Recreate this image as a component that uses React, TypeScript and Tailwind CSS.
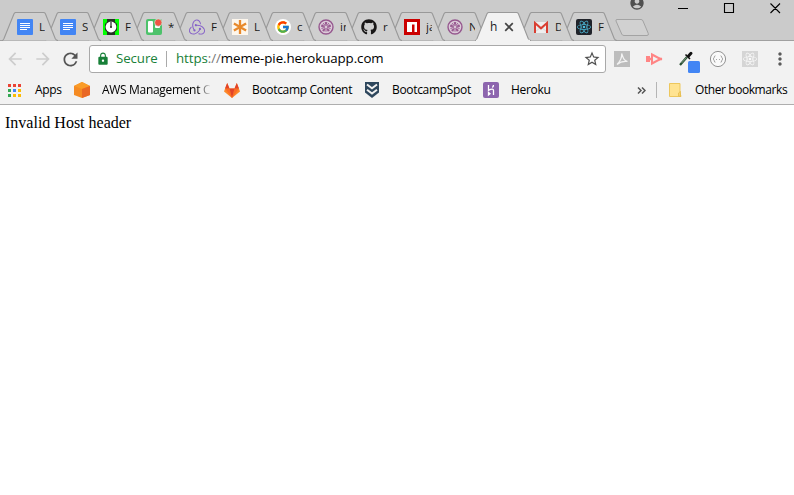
import type { ReactNode } from 'react';
import { FaGithub } from 'react-icons/fa';
import { FcGoogle } from 'react-icons/fc';
import { SiRedux, SiReact } from 'react-icons/si';
import { MdArrowBack, MdArrowForward, MdRefresh, MdLock, MdStarBorder, MdAccountCircle, MdMoreVert } from 'react-icons/md';

function DocsIcon() {
  return (
    <svg width="16" height="16" viewBox="0 0 16 16">
      <rect width="16" height="16" rx="1" fill="#4285f4" />
      <path d="M3 4.500h10M3 6.500h10M3 8.500h10M3 10.500h7" stroke="#fff" strokeWidth="1" />
    </svg>
  );
}

function ClockIcon() {
  return (
    <svg width="16" height="16" viewBox="0 0 16 16">
      <rect width="16" height="16" fill="#00ff00" />
      <path d="M4 0h8v3l2 2v6l-2 2v3H4v-3l-2-2V5l2-2z" fill="#263226" />
      <circle cx="8" cy="8" r="5.400" fill="#fff" />
      <path d="M8 2.500V8.500" stroke="#333" strokeWidth="1.300" />
      <circle cx="8" cy="8" r="1" fill="#333" />
    </svg>
  );
}

function TrelloIcon() {
  return (
    <svg width="16" height="16" viewBox="0 0 16 16" overflow="visible">
      <rect width="16" height="16" rx="2" fill="#4dc26b" />
      <rect x="2" y="2" width="5" height="11.500" rx="1" fill="#fff" />
      <rect x="9" y="2" width="5" height="7" rx="1" fill="#fff" />
      <circle cx="12.300" cy="3.600" r="3.700" fill="#f05545" stroke="#cfe5d3" strokeWidth=".7" />
    </svg>
  );
}

function AsteriskIcon() {
  return (
    <svg width="16" height="16" viewBox="0 0 16 16">
      <rect width="16" height="16" fill="#fdf6ec" />
      <path d="M8 1v14M1.900 4.500l12.200 7M1.900 11.500l12.200-7" stroke="#e8892b" strokeWidth="2.300" />
    </svg>
  );
}

function GoogleIcon() {
  return (
    <span className="flex size-4 items-center justify-center rounded-full bg-white">
      <FcGoogle size={14} />
    </span>
  );
}

function JasmineIcon() {
  return (
    <svg width="16" height="16" viewBox="0 0 16 16">
      <circle cx="8" cy="8" r="7" fill="#dccbd9" stroke="#96588f" strokeWidth="1.400" />
      {[0, 72, 144, 216, 288].map((a) => (
        <g key={a} transform={`rotate(${a} 8 8)`}>
          <path d="M8 7.500L6.600 3.400 8 2.800l1.400.6z" fill="#96588f" />
          <path d="M8 9.300v3.400" stroke="#96588f" strokeWidth=".9" />
        </g>
      ))}
      <circle cx="8" cy="8" r=".7" fill="#e8dbe6" />
    </svg>
  );
}

function NpmIcon() {
  return (
    <svg width="16" height="16" viewBox="0 0 16 16">
      <rect width="16" height="16" fill="#cb0000" />
      <path d="M3 3h10v10h-2.500V5.500H8V13H3z" fill="#fff" />
    </svg>
  );
}

function GmailIcon() {
  return (
    <svg width="16" height="16" viewBox="0 0 16 16">
      <rect x="1" y="3" width="14" height="11" fill="#eee" />
      <path d="M2 13l6-5 6 5" fill="none" stroke="#ccc" strokeWidth=".7" />
      <path d="M2 14V4l6 5.300L14 4v10" fill="none" stroke="#d93f32" strokeWidth="2" />
    </svg>
  );
}

function ReactIcon() {
  return (
    <span className="flex size-4 items-center justify-center rounded-[2px] bg-[#20232a]">
      <SiReact size={14} color="#4fc0df" />
    </span>
  );
}

interface TabData {
  label: string;
  icon?: ReactNode;
}

const tabs: TabData[] = [
  { label: 'L', icon: <DocsIcon /> },
  { label: 'S', icon: <DocsIcon /> },
  { label: 'F', icon: <ClockIcon /> },
  { label: '*', icon: <TrelloIcon /> },
  { label: 'F', icon: <SiRedux size={16} color="#8560c8" /> },
  { label: 'L', icon: <AsteriskIcon /> },
  { label: 'c', icon: <GoogleIcon /> },
  { label: 'in', icon: <JasmineIcon /> },
  { label: 'r', icon: <FaGithub size={16} color="#191717" /> },
  { label: 'ja', icon: <NpmIcon /> },
  { label: 'N', icon: <JasmineIcon /> },
  { label: 'h' },
  { label: 'D', icon: <GmailIcon /> },
  { label: 'F', icon: <ReactIcon /> },
];

function Tab({ tab, index }: { tab: TabData; index: number }) {
  const active = !tab.icon;
  return (
    <div className="relative h-[29px] w-[43px] shrink-0" style={{ zIndex: active ? 30 : 20 - index }}>
      <svg className="absolute top-0 left-0" width="57" height="29" viewBox="0 0 57 29">
        <path
          d="M0 28.500C1.200 28.500 1.500 27.500 2 26.500L11.900 2C12.400.8 12.900.5 13.900.5H41.500C42.500.5 43 .8 43.500 2L53.200 26.500C53.700 27.500 54 28.500 56 28.500"
          fill={active ? '#f2f2f2' : '#cfcfcf'}
          stroke="#999"
          strokeWidth="1.100"
        />
        {active && <path d="M1 28.500H55" stroke="#f2f2f2" strokeWidth="1.400" />}
      </svg>
      <div className="relative flex h-[29px] items-center pl-[15px]">
        {tab.icon && <span className="mr-[6px] flex size-4 shrink-0 items-center">{tab.icon}</span>}
        <span className={active ? 'text-[12px]' : 'w-[6px] shrink-0 overflow-hidden text-[11.500px] whitespace-nowrap'}>{tab.label}</span>
        {active && (
          <svg className="ml-[7px] shrink-0" width="10" height="10" viewBox="0 0 10 10">
            <path d="M1.200 1.200l7.600 7.600M8.800 1.200L1.200 8.800" stroke="#444" strokeWidth="1.700" />
          </svg>
        )}
      </div>
    </div>
  );
}

function TitleBar() {
  return (
    <header className="relative flex h-[41px] items-start border-b border-[#a0a0a0] bg-[#cbcbcb]">
      <div className="flex pt-3 pl-0.5">
        {tabs.map((tab, i) => (
          <Tab key={i} tab={tab} index={i} />
        ))}
      </div>
      <svg className="mt-[18px] ml-[9px] shrink-0" width="37" height="19" viewBox="0 0 37 19">
        <path d="M4 1.500H28Q29.500 1.500 30 3L35.300 15.500Q35.800 17.500 34 17.500H11Q9.300 17.500 8.700 16L3 3Q2.500 1.500 4 1.500Z" fill="#d1d1d1" stroke="#a3a3a3" />
      </svg>
      <div className="absolute top-0 right-0 flex h-6 w-[166px] items-start">
        <MdAccountCircle size={16} color="#505050" className="mt-[-5px] ml-[1px]" />
        <svg className="absolute top-0 left-0" width="166" height="17" viewBox="0 0 166 17" fill="none" stroke="#000">
          <path d="M50 8.500h10M96.500 3.500h9v9h-9zM142.500 3.500l9.500 9.500M152 3.500l-9.500 9.500" strokeWidth="1.100" />
        </svg>
      </div>
    </header>
  );
}

function Extensions() {
  return (
    <div className="flex items-center">
      <svg className="ml-2" width="16" height="16" viewBox="0 0 16 16">
        <rect width="16" height="16" fill="#bdbdbd" />
        <path d="M7.700 2.500C9.500 8 10 9.500 13.500 10.500 10 10 6 11 3 13.500 6.500 10 8 6.500 7.700 2.500z" fill="none" stroke="#f3f3f3" strokeWidth="1.200" />
      </svg>
      <svg className="ml-[15px]" width="18" height="16" viewBox="0 0 18 16">
        <path d="M1 5h4v6H1z" fill="#ff8585" />
        <path d="M7 3.500L15.500 8 7 12.500z" fill="none" stroke="#ff8585" strokeWidth="2" />
        <path d="M4 8h2M13.500 8H17" stroke="#ff8585" strokeWidth="2.400" />
      </svg>
      <svg className="ml-[16px] overflow-visible" width="18" height="18" viewBox="0 0 18 18">
        <path d="M1 15L8 7" stroke="#294f32" strokeWidth="2.200" />
        <path d="M2.500 13l5-5.500" stroke="#8eaa90" strokeWidth=".8" />
        <path d="M6.500 4.500l4.500 4.500" stroke="#111" strokeWidth="1.600" />
        <path d="M9.500 6l2.500-2.700" stroke="#111" strokeWidth="3" strokeLinecap="round" />
        <rect x="9" y="11" width="12" height="12" rx="1.500" fill="#4285f4" />
      </svg>
      <svg className="ml-[12px]" width="18" height="18" viewBox="0 0 18 18" fill="none" stroke="#929292">
        <circle cx="9" cy="9" r="7.600" fill="#fafafa" />
        <path d="M6.500 5.800Q5.300 5.800 5.300 7T4 9Q5.300 9.500 5.300 11T6.500 12.200M11.500 5.800Q12.700 5.800 12.700 7T14 9Q12.700 9.500 12.700 11T11.500 12.200M7 9.500h1M10 9.500h1" strokeWidth=".8" />
      </svg>
      <span className="ml-[15px] flex size-4 items-center justify-center bg-[#d5d5d5]">
        <SiReact size={14} color="#fafafa" />
      </span>
      <MdMoreVert size={20} color="#5a5a5a" className="ml-[12px]" />
    </div>
  );
}

function Toolbar() {
  return (
    <div className="flex h-9 items-center">
      <MdArrowBack size={20} color="#cdcdcd" className="ml-[5px]" />
      <MdArrowForward size={20} color="#cdcdcd" className="ml-[8px]" />
      <MdRefresh size={21} color="#555" className="ml-[7px]" />
      <div className="ml-[8px] flex h-7 w-[517px] items-center rounded-[3px] border border-[#a9a9a9] bg-white text-[14px]">
        <MdLock size={14} color="#188038" className="ml-[6px]" />
        <span className="ml-[6px] w-[42px] text-[13.300px] tracking-[-0.100px] text-[#188038]">Secure</span>
        <span className="ml-[8px] h-4 w-px bg-[#aaa]" />
        <span className="ml-[9px] text-[13.300px] tracking-[-0.070px] whitespace-nowrap text-black">
          <span className="text-[#188038]">https</span>
          <span className="text-[#777]">://</span>
          meme-pie.herokuapp.com
        </span>
        <MdStarBorder size={18} color="#505050" className="mr-1 ml-auto" />
      </div>
      <Extensions />
    </div>
  );
}

const appColors = ['#ea4335', '#ea4335', '#ea4335', '#34a853', '#4285f4', '#fbbc05', '#34a853', '#fbbc05', '#fbbc05'];

function Bookmarks() {
  return (
    <div className="flex h-[28px] items-center border-b border-[#aeaeae] pb-px text-[12px] tracking-[-0.320px] whitespace-nowrap text-black">
      <div className="ml-2 grid w-[13px] grid-cols-3 gap-[2px]">
        {appColors.map((color, i) => (
          <span key={i} className="size-[3px]" style={{ backgroundColor: color }} />
        ))}
      </div>
      <span className="ml-[14px] w-[38px]">Apps</span>
      <svg width="18" height="16" viewBox="0 0 18 16">
        <path d="M1 4L9 0l8 4v9l-8 3-8-3z" fill="#f58b23" />
        <path d="M1 4l8-4 8 4-8 3z" fill="#fa9c28" />
        <path d="M9 7l8-3v9l-8 3z" fill="#e96825" />
      </svg>
      <span className="ml-[11px] w-[109px] overflow-hidden [mask-image:linear-gradient(90deg,black_88%,transparent_100%)]">AWS Management C</span>
      <svg className="ml-[13px]" width="16" height="15" viewBox="0 0 16 15">
        <path d="M3.200 0L0 8.500 8 15l8-6.500L12.800 0 10.500 5.500h-5z" fill="#fc8a2b" />
        <path d="M1 5.500h4.500L8 15zM15 5.500h-4.500L8 15z" fill="#fc6d26" />
        <path d="M5.500 5.500h5L8 15zM3.200 0L1 5.500h4.500zM12.800 0L15 5.500h-4.500z" fill="#e24329" />
      </svg>
      <span className="ml-[12px] w-[100px]">Bootcamp Content</span>
      <svg className="ml-[13px]" width="14" height="16" viewBox="0 0 14 16">
        <path d="M0 0h14v10.500L7 16 0 10.500z" fill="#2e475d" />
        <path d="M2 2.500l5 3.800 5-3.800M2 7.800l5 3.800 5-3.800" fill="none" stroke="#f2f2f2" strokeWidth="2" />
      </svg>
      <span className="ml-[13px] w-[78px]">BootcampSpot</span>
      <svg className="ml-[13px]" width="16" height="16" viewBox="0 0 16 16">
        <rect width="16" height="16" rx="2" fill="#8d65ae" />
        <path d="M5.500 3v5.300Q10.500 6 10.500 8.500V13M10.500 3q0 1.500-1.200 2.500M5.500 10.500V13l1.500-1.200z" fill="none" stroke="#fff" strokeWidth="1.300" />
      </svg>
      <span className="ml-[12px]">Heroku</span>
      <svg className="mr-[10px] ml-auto" width="9" height="7" viewBox="0 0 9 7">
        <path d="M1 .5l3 3-3 3M5 .5l3 3-3 3" fill="none" stroke="#555" strokeWidth="1.500" />
      </svg>
      <span className="h-4 w-px bg-[#b5b5b5]" />
      <svg className="ml-[12px]" width="13" height="14" viewBox="0 0 13 14">
        <path d="M.5.500h10.500v9l1 4H.5z" fill="#ffe391" stroke="#edc75d" />
        <path d="M9.500 13v-3l2-1.500v5z" fill="#f8d36b" stroke="#e4b94b" strokeWidth=".7" />
      </svg>
      <span className="mr-[6px] ml-[13px] w-[93px] tracking-[-0.420px]">Other bookmarks</span>
    </div>
  );
}

export default function App() {
  return (
    <div className="h-[495px] w-[794px] overflow-hidden bg-white font-['Open_Sans','Noto_Sans',sans-serif] text-[#1a1a1a]">
      <TitleBar />
      <nav className="bg-[#f2f2f2]">
        <Toolbar />
        <Bookmarks />
      </nav>
      <main className="px-[5px] pt-[8px] font-['Liberation_Serif',serif] text-[16px] leading-[19px] text-black">Invalid Host header</main>
    </div>
  );
}
